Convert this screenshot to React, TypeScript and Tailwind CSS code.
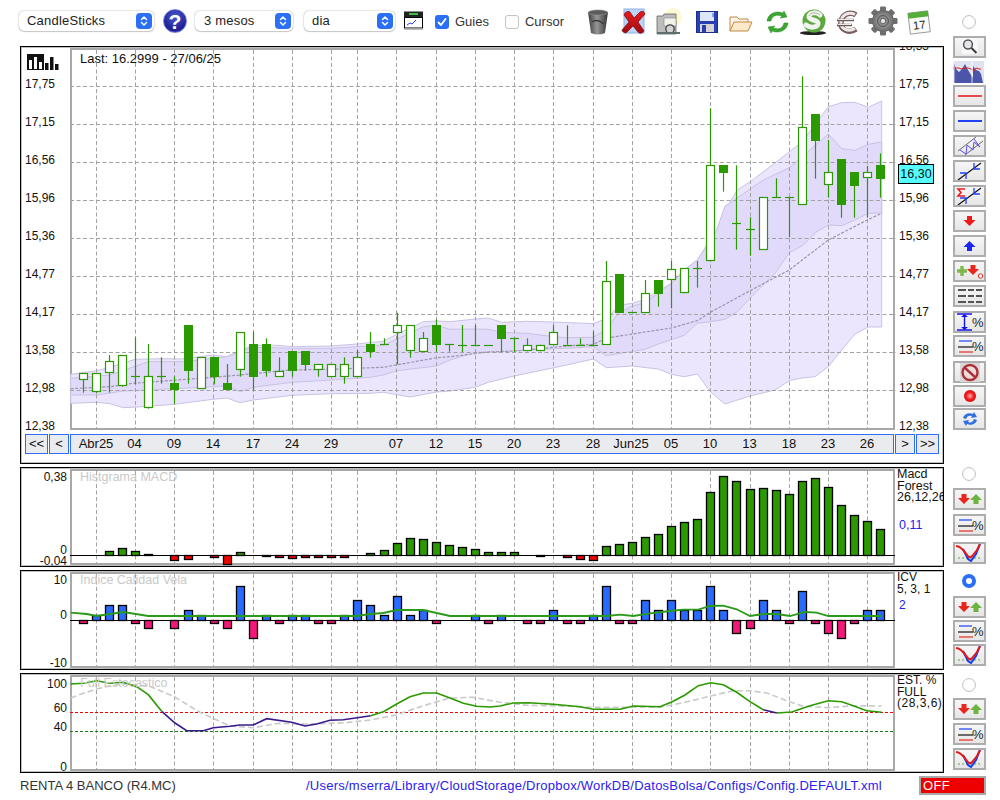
import React from "react";

type P = number[][];
const pts = (bx: number, by: number, a: P): P => a.map(([x, y]) => [bx + x / 3, by + y / 3]);
const str = (p: P) => p.map(([x, y]) => `${x.toFixed(1)},${y.toFixed(1)}`).join(" ");
const X = (i: number) => Math.floor(83.45 + 13.07 * i) + 0.5;
const GRID_X = [96.5, 135.5, 174.5, 213.5, 253.5, 292.5, 331.5, 357.5, 396.5, 436.5, 475.5, 514.5, 553.5, 593.5, 632.5, 671.5, 710.5, 750.5, 789.5, 828.5, 867.5];
const GRID_Y = [86.5, 124.5, 162.5, 200.5, 238.5, 276.5, 314.5, 352.5, 390.5];
const DATES: [string, number][] = [["Abr25", 96], ["04", 134.5], ["09", 174], ["14", 213], ["17", 253], ["24", 292], ["29", 331], ["07", 396], ["12", 436], ["15", 475], ["20", 514], ["23", 553], ["28", 593], ["Jun25", 631], ["05", 671], ["10", 710], ["13", 749.5], ["18", 789], ["23", 828], ["26", 867]];

// [wickTop, bodyTop, bodyBottom, wickBottom, type 0 hollow, 1 filled, 2 doji]
const C6 = [[280, 280, 298, 338, 0], [280, 280, 334, 340, 0], [225, 244, 277, 338, 0], [226, 226, 316, 320, 0], [172, 289, 289, 313, 2], [192, 289, 382, 386, 0], [232, 289, 289, 311, 2], [289, 310, 326, 371, 1], [135, 135, 269, 311, 1], [232, 232, 325, 327, 0], [232, 232, 287, 313, 1], [252, 310, 326, 331, 1], [157, 157, 268, 290, 0], [155, 193, 287, 331, 1], [175, 193, 269, 290, 1], [232, 272, 287, 290, 0], [214, 214, 269, 290, 1], [214, 214, 251, 272, 1], [253, 253, 268, 290, 0], [253, 253, 287, 290, 0], [232, 253, 287, 311, 0], [210, 232, 287, 290, 0], [156, 193, 212, 233, 1], [175, 193, 193, 193, 2], [98, 136, 155, 253, 0], [136, 136, 211, 233, 0], [156, 175, 212, 215, 0], [118, 136, 191, 215, 1], [193, 193, 193, 215, 2]];
const C8 = [[225, 284, 284, 306, 2], [225, 284, 284, 284, 2], [284, 284, 284, 284, 2], [226, 226, 263, 306, 1], [265, 265, 265, 306, 2], [265, 284, 301, 304, 0], [284, 284, 301, 304, 0], [226, 247, 281, 284, 0], [226, 284, 284, 284, 2], [265, 284, 284, 284, 2], [244, 284, 284, 284, 2], [33, 92, 281, 284, 0], [72, 72, 185, 187, 1], [187, 187, 187, 187, 2], [90, 130, 185, 187, 0], [91, 91, 128, 170, 1], [33, 56, 88, 175, 0], [55, 55, 127, 130, 0], [33, 55, 55, 113, 2]];
const C7 = [[145, 316, 601, 604, 0], [316, 316, 335, 395, 1], [316, 490, 490, 569, 2], [472, 508, 508, 587, 2], [412, 412, 566, 569, 0], [355, 412, 412, 412, 2], [412, 412, 412, 532, 2], [49, 202, 431, 434, 0], [163, 163, 239, 356, 1], [240, 337, 373, 413, 0], [298, 298, 431, 473, 1], [337, 337, 374, 473, 1], [318, 337, 352, 473, 0], [280, 316, 353, 413, 1]];
const CANDLES = [...C6.map((c) => c.slice(0, 4).map((v) => 280 + v / 3).concat(c[4])), ...C8.map((c) => c.slice(0, 4).map((v) => 250 + v / 3).concat(c[4])), ...C7.map((c) => c.slice(0, 4).map((v) => 60 + v / 3).concat(c[4]))];

const OUT_UP = [...pts(0, 280, [[212, 283], [290, 272], [330, 262], [406, 238], [484, 236], [545, 237], [640, 225], [680, 230], [720, 212], [760, 196], [830, 196], [880, 200], [994, 198], [1070, 192], [1150, 184], [1190, 163], [1270, 125], [1310, 123]]), ...pts(450, 250, [[0, 215], [76, 207], [115, 204], [155, 217], [230, 214], [310, 216], [430, 221], [470, 205], [510, 165], [547, 160], [586, 148], [664, 100], [703, 60], [742, 30]]), ...pts(450, 60, [[800, 510], [820, 460], [862, 390], [905, 362], [980, 305], [1057, 245], [1135, 140], [1175, 128], [1215, 127], [1255, 142], [1295, 123]])];
const OUT_LOW = [...pts(450, 250, [[1295, 231], [1255, 231], [1215, 252], [1175, 300], [1135, 350], [1095, 380], [1050, 385], [1018, 392], [975, 420], [900, 438], [825, 462], [781, 425], [742, 372], [703, 380], [664, 373], [625, 357], [547, 348], [469, 353], [430, 327], [350, 345], [193, 378], [115, 397], [76, 412], [0, 423]]), ...pts(0, 280, [[1310, 336], [1231, 351], [1150, 337], [1111, 340], [994, 341], [877, 346], [760, 360], [720, 368], [680, 354], [640, 358], [523, 373], [445, 379], [370, 383], [330, 371], [290, 367], [212, 370]])];
const IN_UP = [...pts(0, 280, [[212, 295], [330, 285], [445, 245], [545, 245], [600, 240], [680, 230], [720, 215], [760, 202], [880, 205], [994, 205], [1070, 200], [1150, 196], [1190, 178], [1270, 140], [1310, 136]]), ...pts(450, 250, [[0, 238], [76, 237], [115, 238], [155, 247], [230, 250], [310, 260], [350, 263], [430, 262], [469, 238], [505, 190], [547, 168], [586, 158], [664, 100], [703, 60], [742, 30]]), ...pts(450, 60, [[800, 510], [825, 438], [860, 415], [940, 360], [1018, 323], [1057, 290], [1135, 222], [1175, 266], [1215, 271], [1255, 253], [1295, 246]])];
const IN_LOW = [...pts(450, 60, [[1295, 459], [1255, 460], [1215, 480], [1175, 497], [1135, 495], [1100, 515], [1060, 555], [1018, 578], [975, 640], [900, 715]]), ...pts(450, 250, [[862, 185], [825, 208], [781, 215], [742, 220], [703, 256], [625, 282], [586, 298], [469, 317], [430, 290], [350, 295], [232, 300], [154, 305], [76, 307], [0, 330]]), ...pts(0, 280, [[1310, 258], [1190, 272], [1150, 285], [1111, 292], [994, 300], [877, 307], [760, 322], [720, 335], [680, 318], [640, 320], [445, 330], [370, 333], [290, 345], [212, 345]])];
const SMA = [...pts(0, 280, [[212, 326], [330, 320], [400, 310], [640, 292], [720, 285], [870, 270], [1000, 268], [1090, 264], [1150, 262], [1310, 233]]), ...pts(450, 250, [[0, 320], [115, 306], [200, 303], [350, 288], [430, 283], [470, 264], [664, 234], [742, 212], [781, 187], [900, 122], [1018, 60]]), ...pts(450, 60, [[1135, 540], [1252, 480], [1295, 460]])];

// MACD: top (or bottom) edge in zoomed units, baseline 285; 0 = none
const MACD = [0, 0, 274, 265, 274, 283, 0, 301, 298, 0, 292, 311, 277, 0, 289, 292, 295, 292, 292, 292, 292, 0, 280, 271, 250, 235, 238, 247, 256, 262, 268, 277, 277, 277, 0, 289, 0, 292, 298, 301, 259, 253, 247, 232, 223, 199, 187, 178, 97, 49, 64, 88, 85, 91, 103, 64, 55, 82, 136, 166, 184, 208];
const ICV = [490, 466, 436, 436, 490, 505, 0, 505, 451, 466, 490, 505, 379, 535, 466, 490, 466, 466, 490, 490, 466, 421, 436, 466, 409, 466, 451, 490, 0, 0, 466, 490, 466, 0, 490, 490, 451, 490, 490, 466, 379, 490, 490, 421, 451, 421, 451, 451, 379, 451, 520, 505, 421, 451, 490, 394, 490, 520, 535, 490, 451, 451];
const ICV_LINE = [...pts(0, 460, [[212, 458], [260, 462], [290, 468], [370, 456], [445, 468], [1070, 468], [1110, 462], [1150, 459], [1190, 450], [1270, 450]]), ...pts(450, 460, [[0, 468], [470, 468], [510, 464], [550, 468], [600, 460], [660, 453], [700, 449], [745, 449], [780, 438], [820, 437], [860, 448], [900, 468], [940, 462], [980, 462], [1020, 468], [1065, 456], [1100, 458], [1135, 468], [1295, 468]])];
const EST_G1 = pts(0, 665, [[212, 60], [250, 58], [290, 50], [330, 58], [370, 55], [410, 68], [445, 92], [485, 142]]);
const EST_P1 = pts(0, 665, [[485, 142], [525, 177], [560, 200], [610, 200], [640, 191], [690, 187], [720, 183], [760, 183], [800, 164], [875, 175], [915, 186], [950, 180], [990, 169], [1030, 167], [1072, 161], [1112, 155]]);
const EST_G2 = [...pts(0, 665, [[1112, 155], [1150, 143], [1190, 120], [1230, 98], [1270, 87], [1310, 87], [1350, 102], [1390, 118], [1430, 127], [1470, 129]]), ...pts(500, 665, [[0, 126], [40, 117], [85, 116], [160, 121], [240, 128], [280, 136], [360, 136], [400, 126], [480, 128], [515, 114], [555, 93], [595, 65], [632, 56], [670, 62], [710, 85], [750, 113], [790, 137]])];
const EST_P2 = pts(500, 665, [[790, 137], [830, 147]]);
const EST_G3 = pts(500, 665, [[830, 147], [875, 144], [930, 125], [985, 110], [1025, 113], [1060, 125], [1100, 140], [1145, 145]]);
const EST_D = [...pts(0, 665, [[212, 102], [250, 88], [290, 75], [330, 65], [370, 60], [445, 65], [523, 98], [600, 145], [690, 186], [760, 191], [838, 178], [915, 180], [1030, 177], [1112, 168], [1190, 152], [1270, 125], [1350, 102], [1420, 100]]), ...pts(500, 665, [[0, 115], [80, 124], [160, 125], [280, 130], [360, 130], [480, 130], [555, 115], [632, 96], [700, 80], [750, 80], [800, 87], [860, 110], [910, 127], [985, 131], [1060, 125], [1145, 126]])];

const VGrid = ({ top, bottom }: { top: number; bottom: number }) => (
  <g stroke="#a2a2a2" strokeWidth="1" strokeDasharray="4 2.5">
    {GRID_X.map((x) => <line key={x} x1={x} x2={x} y1={top} y2={bottom} />)}
  </g>
);

const MainChart = () => (
  <svg width="821" height="378" viewBox="72 50 821 378" className="block overflow-visible">
    <polygon points={str([...OUT_UP, ...OUT_LOW])} fill="#ebe6fd" stroke="#c8c3e3" strokeWidth="1" />
    <polygon points={str([...IN_UP, ...IN_LOW])} fill="#e2dafb" stroke="#c8c3e3" strokeWidth="1" />
    <VGrid top={50} bottom={428} />
    <g stroke="#a2a2a2" strokeWidth="1" strokeDasharray="4 2.5">
      {GRID_Y.map((y) => <line key={y} x1="70" x2="896" y1={y} y2={y} />)}
    </g>
    <polyline points={str(SMA)} fill="none" stroke="#9c96ad" strokeWidth="1.2" strokeDasharray="3 1.5" />
    {CANDLES.map((c, i) => {
      const x = X(i);
      const [wt, bt, bb, wb, t] = c;
      const rt = Math.round(bt) + 0.5;
      const rb = Math.round(bb) + 0.5;
      return (
        <g key={i}>
          <line x1={x} x2={x} y1={wt} y2={wb} stroke="#2a9a00" strokeWidth="1.2" />
          {t === 2 && <line x1={x - 4.5} x2={x + 4.5} y1={rt} y2={rt} stroke="#2a9a00" strokeWidth="1.2" />}
          {t === 1 && <rect x={x - 4.5} y={rt - 0.5} width="9" height={rb - rt + 1} fill="#2a9a00" />}
          {t === 0 && <rect x={x - 4} y={rt} width="8" height={rb - rt} fill="#ffffff" stroke="#2a9a00" strokeWidth="1.2" />}
        </g>
      );
    })}
  </svg>
);

const MacdChart = () => (
  <svg width="821" height="92" viewBox="72 471 821 92" className="block overflow-visible">
    <VGrid top={471} bottom={563} />
    {MACD.map((v, i) => {
      if (!v) return null;
      const e = Math.round(460 + v / 3) + 0.5;
      const t = Math.min(e, 555.5);
      const h = Math.abs(e - 555.5);
      return <rect key={i} x={X(i) - 4} y={t} width="8" height={h} fill={v > 285 ? "#f20000" : "#2a9a00"} stroke="#000" strokeWidth="1.3" />;
    })}
    <line x1="70" x2="895" y1="555.5" y2="555.5" stroke="#000" strokeWidth="1.1" />
  </svg>
);

const IcvChart = () => (
  <svg width="821" height="92" viewBox="72 574 821 92" className="block overflow-visible">
    <VGrid top={574} bottom={666} />
    {ICV.map((v, i) => {
      if (!v) return null;
      const e = Math.round(460 + v / 3) + 0.5;
      const t = Math.min(e, 620.5);
      const h = Math.abs(e - 620.5);
      return <rect key={i} x={X(i) - 4} y={t} width="8" height={h} fill={v > 481 ? "#f3187a" : "#2a6bff"} stroke="#000" strokeWidth="1.3" />;
    })}
    <line x1="70" x2="895" y1="620.5" y2="620.5" stroke="#000" strokeWidth="1.1" />
    <polyline points={str(ICV_LINE)} fill="none" stroke="#2a9a1a" strokeWidth="1.8" />
  </svg>
);

const EstChart = () => (
  <svg width="821" height="92" viewBox="72 678 821 92" className="block overflow-visible">
    <VGrid top={678} bottom={770} />
    <line x1="70" x2="895" y1="713.5" y2="713.5" stroke="#f00000" strokeWidth="1" strokeDasharray="3 2" />
    <line x1="70" x2="895" y1="732.5" y2="732.5" stroke="#1a7a1a" strokeWidth="1" strokeDasharray="3 2" />
    <polyline points={str(EST_D)} fill="none" stroke="#c9c9c9" strokeWidth="1.6" strokeDasharray="6 3" />
    <polyline points={str(EST_G1)} fill="none" stroke="#2a9a00" strokeWidth="1.6" />
    <polyline points={str(EST_P1)} fill="none" stroke="#3a1a8c" strokeWidth="1.6" />
    <polyline points={str(EST_G2)} fill="none" stroke="#2a9a00" strokeWidth="1.6" />
    <polyline points={str(EST_P2)} fill="none" stroke="#3a1a8c" strokeWidth="1.6" />
    <polyline points={str(EST_G3)} fill="none" stroke="#2a9a00" strokeWidth="1.6" />
  </svg>
);

const Chevrons = () => (
  <svg width="8" height="12" viewBox="0 0 8 12" fill="none" stroke="#fff" strokeWidth="1.5" strokeLinecap="round" strokeLinejoin="round">
    <path d="M1.5 4.5 4 2l2.5 2.5" />
    <path d="M1.5 7.5 4 10l2.5-2.5" />
  </svg>
);

const Select = ({ label, w, ml, pl }: { label: string; w: string; ml: string; pl: string }) => (
  <div className={`${w} ${ml} ${pl} h-[20px] rounded-[5px] bg-white shadow-[0_0_1.5px_rgba(0,0,0,0.45),0_1px_1px_rgba(0,0,0,0.15)] flex items-center justify-between pr-[2px] text-[13px] tracking-[0.2px] text-[#222]`}>
    <span>{label}</span>
    <span className="w-[16px] h-[16px] rounded-[4px] bg-[#2a6ff5] flex items-center justify-center"><Chevrons /></span>
  </div>
);

const IconTrash = () => (
  <svg width="24" height="28" viewBox="0 0 24 28" className="ml-[22px]">
    <defs><linearGradient id="tr" x1="0" x2="1"><stop offset="0" stopColor="#3c3c3c" /><stop offset="0.45" stopColor="#979797" /><stop offset="1" stopColor="#333" /></linearGradient></defs>
    <path d="M2 4 Q12 0 22 4 L19 25 Q12 28 5 25 Z" fill="url(#tr)" />
    <ellipse cx="12" cy="4.5" rx="9.5" ry="2.6" fill="#5a5a5a" stroke="#9a9a9a" strokeWidth="0.6" />
    <path d="M6 14q5-4 12 2" stroke="#3a3a3a" strokeWidth="1.5" fill="none" />
  </svg>
);
const IconX = () => (
  <svg width="28" height="28" viewBox="0 0 28 28" className="ml-[10px]">
    <defs><linearGradient id="xr" x1="0" y1="0" x2="0" y2="1"><stop offset="0" stopColor="#e81c20" /><stop offset="1" stopColor="#a00a0e" /></linearGradient></defs>
    <rect x="4" y="1" width="20" height="24" fill="#bcd4f7" stroke="#8fb2e6" />
    <path d="M5 5q3-3 5-1l4 6 6-6q4-2 5 2l-7 8 6 9q-3 4-6 1l-5-6-7 7q-4-1-4-3l7-8-5-7z" fill="url(#xr)" stroke="#7d0508" strokeWidth="0.7" />
  </svg>
);
const IconCamera = () => (
  <svg width="28" height="28" viewBox="0 0 28 28" className="ml-[8px]">
    <circle cx="17" cy="9" r="9" fill="#fbf7c8" opacity="0.8" />
    <path d="M1 8h6l1-2h12v20H1z" fill="#bcbcbc" stroke="#666" strokeWidth="0.8" />
    <rect x="8" y="10" width="12" height="8" rx="1" fill="#f3f3ea" stroke="#888" strokeWidth="0.6" />
    <circle cx="14" cy="21" r="4.2" fill="#d4d4d4" stroke="#444" strokeWidth="1.3" />
    <rect x="1" y="24" width="23" height="2" fill="#5f6f6f" />
  </svg>
);
const IconSave = () => (
  <svg width="22" height="22" viewBox="0 0 22 22" className="ml-[12px]">
    <rect x="0.5" y="0.5" width="21" height="21" fill="#2a3fb0" stroke="#1c2c90" />
    <rect x="4" y="1" width="14" height="9" fill="#dce6f7" />
    <rect x="16" y="2" width="2" height="4" fill="#8ca2d8" />
    <rect x="4" y="13" width="14" height="8" fill="#d5d5d5" />
    <rect x="6" y="14" width="4" height="7" fill="#2a3fb0" />
  </svg>
);
const IconFolder = () => (
  <svg width="24" height="18" viewBox="0 0 24 18" className="ml-[11px]">
    <path d="M1 17V3h7l2 2h9v3" fill="#fdf5e8" stroke="#c08a48" />
    <path d="M1 17 5 8h18l-4 9z" fill="#fbe9c8" stroke="#c08a48" />
  </svg>
);
const IconRefresh = () => (
  <svg width="25" height="24" viewBox="0 0 25 24" className="ml-[12px]">
    <path d="M2 11C3 4 10 0 18 3l1-2 3 6-7 1 2-2C11 4 7 6 6 11z" fill="#39a831" stroke="#2a8025" strokeWidth="0.5" />
    <path d="M23 13c-1 7-8 11-16 8l-1 2-3-6 7-1-2 2c6 2 10 0 11-5z" fill="#39a831" stroke="#2a8025" strokeWidth="0.5" />
  </svg>
);
const IconS = () => (
  <svg width="28" height="28" viewBox="0 0 28 28" className="ml-[9px]">
    <ellipse cx="14" cy="25" rx="13" ry="2" fill="#222" />
    <circle cx="15" cy="13" r="11.5" fill="#5aa83e" />
    <path d="M21 7c-3-3-10-3-11 1-1 5 10 3 9 8-1 4-8 4-12 1" fill="none" stroke="#f2f2ee" strokeWidth="5" strokeLinecap="round" />
    <path d="M21 7c-3-3-10-3-11 1" fill="none" stroke="#aab5a5" strokeWidth="1" />
  </svg>
);
const IconEuro = () => (
  <svg width="26" height="26" viewBox="0 0 26 26" className="ml-[8px]">
    <path d="M21 5c-6-4-14-1-15 7-1 8 8 12 15 7" fill="none" stroke="#7b5d5d" strokeWidth="5.5" />
    <path d="M20 4.5c-6-3-13-.5-14 7-1 7 7 11 14 7" fill="none" stroke="#ecE8e8" strokeWidth="3" />
    <path d="M2 10h17M2 15h15" stroke="#6f5a5a" strokeWidth="2.6" />
    <path d="M2.5 9.5h16M2.5 14.5h14" stroke="#ece8e8" strokeWidth="1.2" />
  </svg>
);
const IconGear = () => (
  <svg width="30" height="30" viewBox="0 0 30 30" className="ml-[7px]">
    <defs><radialGradient id="ge"><stop offset="0.3" stopColor="#a4a4a4" /><stop offset="1" stopColor="#666" /></radialGradient></defs>
    <g fill="#6e6e6e">
      {[0, 45, 90, 135, 180, 225, 270, 315].map((a) => <rect key={a} x="12" y="0.5" width="6" height="7" rx="1.2" transform={`rotate(${a} 15 15)`} />)}
    </g>
    <circle cx="15" cy="15" r="11" fill="url(#ge)" />
    <circle cx="15" cy="15" r="5.5" fill="#8a8a8a" stroke="#555" />
    <circle cx="15" cy="15" r="2.6" fill="#e8e8e8" stroke="#444" strokeWidth="0.7" />
  </svg>
);
const IconCal = () => (
  <svg width="26" height="26" viewBox="0 0 26 26" className="ml-[8px]">
    <g transform="rotate(-7 13 13)">
      <rect x="3" y="3" width="20" height="21" fill="#fbfbf8" stroke="#777" strokeWidth="0.7" />
      <rect x="3" y="3" width="20" height="5.5" fill="#53ad38" />
      <text x="13" y="20" textAnchor="middle" fontSize="11.5" fill="#222">17</text>
    </g>
  </svg>
);
const IconWindow = () => (
  <svg width="20" height="20" viewBox="0 0 20 20" className="ml-[9px]">
    <rect x="0" y="0.5" width="19" height="6" fill="#222" />
    <rect x="5" y="2" width="9" height="2" fill="#39c239" />
    <rect x="0.5" y="6.5" width="18" height="10.5" fill="#fff" stroke="#000" />
    <path d="M3 14l3-2 2 1 4-4" fill="none" stroke="#1f3fe0" strokeWidth="1" />
    <rect x="0" y="17.5" width="19" height="1.5" fill="#bbb" />
  </svg>
);

const Radio = ({ on, cls }: { on?: boolean; cls: string }) =>
  on ? (
    <div className={`w-[14px] h-[14px] rounded-full border-[4px] border-[#2a6ff5] bg-white ml-[9px] ${cls}`} />
  ) : (
    <div className={`w-[14px] h-[14px] rounded-full border border-[#c4c4c4] bg-white shadow-[inset_0_0_1px_rgba(0,0,0,0.15)] ml-[9px] ${cls}`} />
  );

const Btn = ({ children, cls = "" }: { children?: React.ReactNode; cls?: string }) => (
  <div className={`w-[33px] h-[22px] shrink-0 border-2 border-[#adadad] bg-gradient-to-b from-[#f6f6f6] to-[#e6e6e6] flex items-center justify-center ${cls}`}>
    {children}
  </div>
);

const Svg = ({ children }: { children: React.ReactNode }) => (
  <svg width="29" height="18" viewBox="0 0 29 18" className="block">{children}</svg>
);
const DownArrow = ({ x, y, c = "#e8261c", s = 1 }: { x: number; y: number; c?: string; s?: number }) => (
  <path d={`M${x - 2.5 * s} ${y - 5 * s}h${5 * s}v${4 * s}h${3.5 * s}l-${6 * s} ${6 * s}-${6 * s}-${6 * s}h${3.5 * s}z`} fill={c} />
);
const UpArrow = ({ x, y, c = "#1a28f0", s = 1 }: { x: number; y: number; c?: string; s?: number }) => (
  <path d={`M${x - 2.5 * s} ${y + 5 * s}h${5 * s}v-${4 * s}h${3.5 * s}l-${6 * s}-${6 * s}-${6 * s} ${6 * s}h${3.5 * s}z`} fill={c} />
);
const LinesPct = () => (
  <Svg>
    <path d="M4 4h13" stroke="#2a4cf0" strokeWidth="1.3" />
    <path d="M3 10h15" stroke="#222" strokeWidth="1.3" />
    <path d="M4 15h14" stroke="#e85a50" strokeWidth="1.6" />
    <text x="17" y="14" fontSize="13" fill="#222">%</text>
  </Svg>
);
const Curve = () => (
  <Svg>
    <path d="M3 14h24" stroke="#2a9a1a" strokeWidth="0.8" strokeDasharray="2 2" />
    <path d="M8 5l5 10 3 2 5-7 4-10" fill="none" stroke="#1a3af0" strokeWidth="2" />
    <path d="M1 2c5 0 8 5 11 9 2 3 4 3 6 0l4-5 3-6" fill="none" stroke="#e01a1a" strokeWidth="2" />
  </Svg>
);
const RedGreen = () => (
  <Svg>
    <DownArrow x={9} y={9} />
    <UpArrow x={21} y={9} c="#6db33f" />
  </Svg>
);
const Trend = () => (
  <>
    <path d="M3 18 26 1" stroke="#111" strokeWidth="1.2" />
    <path d="M11 17v-6H5" fill="none" stroke="#2040ff" strokeWidth="1.3" />
    <path d="M19 1v6h6" fill="none" stroke="#2040ff" strokeWidth="1.3" />
  </>
);

const Sidebar = () => (
  <div className="w-[47px] flex flex-col">
    <Radio cls="mt-[15px] mb-[7px]" />
    <div className="flex flex-col gap-[3px]">
      <Btn>
        <svg width="25" height="18" viewBox="0 0 25 18" className="block">
          <rect x="5" y="0" width="16" height="16" fill="#f8f8f8" />
          <circle cx="11" cy="6.5" r="4.4" fill="#e4e6ea" stroke="#555" strokeWidth="1.5" />
          <path d="M14.5 10l5 5" stroke="#3a3a3a" strokeWidth="2" />
        </svg>
      </Btn>
      <div className="w-[31px] h-[22px] shrink-0 bg-[#dfe3f1]">
        <svg width="31" height="22" viewBox="0 0 31 22" className="block">
          <path d="M1 22V2l2 6 3 3 3-3 3-5 3 6 3 5 2 3V5l3 4 3 1 2 3 2 9z" fill="#4c56a8" />
          <path d="M0 7h6l2 1 3-1 4 0 3 1 3 2 2-3 3 1 2 0" fill="none" stroke="#e82020" strokeWidth="1" />
          <path d="M1 0v22M19 0v22" stroke="#fff" strokeWidth="0.8" />
        </svg>
      </div>
      <Btn cls="mt-[-1px]"><Svg><path d="M3 9h24" stroke="#e8494b" strokeWidth="2" /></Svg></Btn>
      <Btn><Svg><path d="M3 9h24" stroke="#2040f5" strokeWidth="2" /></Svg></Btn>
      <Btn>
        <Svg>
          <path d="M3 14 21 0M10 18 28 4" stroke="#555" strokeWidth="0.9" />
          <path d="M5 13l6 4 1-9 6 5 1-8 6 5-6-8" fill="none" stroke="#5a4ee8" strokeWidth="1" />
        </Svg>
      </Btn>
      <Btn><Svg><Trend /></Svg></Btn>
      <Btn>
        <Svg>
          <Trend />
          <path d="M10 2H3l3 3.5L3 9h7" fill="none" stroke="#e81f1f" strokeWidth="1.6" />
        </Svg>
      </Btn>
      <Btn><Svg><DownArrow x={14.5} y={9} c="#f01818" /></Svg></Btn>
      <Btn><Svg><UpArrow x={14.5} y={9} /></Svg></Btn>
      <Btn>
        <Svg>
          <path d="M7 4v10M2 9h10" stroke="#7fb84a" strokeWidth="3.4" />
          <DownArrow x={18} y={8} />
          <circle cx="25.5" cy="14" r="2.2" fill="#fff" stroke="#e8261c" />
        </Svg>
      </Btn>
      <Btn>
        <Svg>
          <g stroke="#555" strokeWidth="2">
            <path d="M3 3h8M13 3h6M21 3h6M3 9h8M13 9h6M21 9h6M3 15h8M13 15h6M21 15h6" />
          </g>
        </Svg>
      </Btn>
      <Btn cls="mt-[1px]">
        <Svg>
          <path d="M2 1h15M2 17h15M9.5 2v14" stroke="#1414ee" strokeWidth="1.4" />
          <path d="M6 4l3.5-3 3.5 3zM6 14l3.5 3 3.5-3z" fill="#1414ee" />
          <text x="17" y="14" fontSize="13" fill="#222">%</text>
        </Svg>
      </Btn>
      <Btn cls="mt-[-1px]"><LinesPct /></Btn>
      <Btn cls="mt-[1px]">
        <svg width="20" height="19" viewBox="0 0 20 19" className="block">
          <rect width="20" height="19" fill="#d8d8d8" />
          <circle cx="10" cy="9.5" r="7.5" fill="#eadcdc" stroke="#b03038" strokeWidth="2.4" />
          <path d="M5 5l10 9" stroke="#b03038" strokeWidth="2.4" />
        </svg>
      </Btn>
      <Btn cls="mt-[-1px]">
        <svg width="14" height="14" viewBox="0 0 14 14" className="block">
          <defs><radialGradient id="rec"><stop offset="0" stopColor="#ffb0b0" /><stop offset="0.6" stopColor="#f42020" /><stop offset="1" stopColor="#d80a0a" /></radialGradient></defs>
          <circle cx="7" cy="7" r="6" fill="url(#rec)" />
        </svg>
      </Btn>
      <Btn cls="mt-[-2px]">
        <svg width="20" height="18" viewBox="0 0 20 18" className="block">
          <path d="M3 8c1-4 6-6 10-4l1-2 3 5-6 1 1-2c-3-1-5 0-6 3z" fill="#2f6fe0" />
          <path d="M17 10c-1 4-6 6-10 4l-1 2-3-5 6-1-1 2c3 1 5 0 6-3z" fill="#2f6fe0" />
        </svg>
      </Btn>
    </div>
    <Radio cls="mt-[37px] mb-[7px]" />
    <div className="flex flex-col gap-[4px]">
      <Btn><RedGreen /></Btn>
      <Btn><LinesPct /></Btn>
      <Btn cls="mt-[2px]"><Curve /></Btn>
    </div>
    <Radio on cls="mt-[10px] mb-[8px]" />
    <div className="flex flex-col gap-[2px]">
      <Btn><RedGreen /></Btn>
      <Btn><LinesPct /></Btn>
      <Btn><Curve /></Btn>
    </div>
    <Radio cls="mt-[12px] mb-[6px]" />
    <div className="flex flex-col gap-[3px]">
      <Btn><RedGreen /></Btn>
      <Btn><LinesPct /></Btn>
      <Btn><Curve /></Btn>
    </div>
    <div className="mt-[6px] -ml-[34px] w-[67px] h-[19px] border-2 border-[#a9a9a9] bg-[#ee0000] text-white text-[13px] leading-[15px] pl-[2px] tracking-[0.3px]">OFF</div>
  </div>
);

const Nav = ({ w, children }: { w: string; children: string }) => (
  <div className={`${w} h-[20px] border border-[#2f6bff] bg-[#eaebef] flex items-center justify-center text-[13px] text-[#111]`}>{children}</div>
);

const Panel = ({ cls, children }: { cls: string; children: React.ReactNode }) => (
  <div className={`w-[924px] border border-black shadow-[inset_0_0_0_1px_rgba(0,0,0,0.25)] relative overflow-hidden ${cls}`}>{children}</div>
);

const Plot = ({ h, children, title }: { h: string; children: React.ReactNode; title?: string }) => (
  <div className={`w-[825px] ${h} border-2 border-[#a8a8a8] relative shrink-0`}>
    {children}
    {title && <div className="absolute left-[8px] -top-[1px] text-[12.5px] leading-[14px] text-[#c9c9c9] whitespace-nowrap">{title}</div>}
  </div>
);

const AXIS_R = ["18,35", "17,75", "17,15", "16,56", "15,96", "15,36", "14,77", "14,17", "13,58", "12,98", "12,38"];

const SubLabels = ({ items }: { items: [string, string][] }) => (
  <div className="w-[49px] flex flex-col items-end pr-[3px] text-[12px] leading-[12px] text-[#111] shrink-0">
    {items.map(([t, m]) => <span key={t} className={m}>{t}</span>)}
  </div>
);

export default function App() {
  return (
    <div className="w-[1000px] h-[800px] bg-white overflow-hidden flex font-['Liberation_Sans',Arial,sans-serif] text-[#1a1a1a]">
      <div className="w-[953px] flex flex-col shrink-0">
        <div className="h-[46px] flex items-start pt-[11px] pl-[19px]">
          <Select label="CandleSticks" w="w-[135px]" ml="" pl="pl-[8px]" />
          <div className="ml-[9px] -mt-[2px] w-[24px] h-[24px] rounded-full border border-[#7a80e0] bg-[radial-gradient(circle_at_50%_30%,#4a56d0,#1c2090_70%,#4a50c0)] flex items-center justify-center text-white text-[21px] font-bold leading-none">?</div>
          <Select label="3 mesos" w="w-[98px]" ml="ml-[8px]" pl="pl-[9px]" />
          <Select label="dia" w="w-[91px]" ml="ml-[11px]" pl="pl-[8px]" />
          <IconWindow />
          <div className="ml-[11px] mt-[4px] w-[14px] h-[14px] rounded-[3px] bg-[#2a6ff5] flex items-center justify-center">
            <svg width="10" height="10" viewBox="0 0 10 10" fill="none" stroke="#fff" strokeWidth="1.8" strokeLinecap="round" strokeLinejoin="round"><path d="M1.5 5.5 4 8l4.5-6" /></svg>
          </div>
          <span className="ml-[6px] mt-[3px] text-[13px] leading-[16px] text-[#333]">Guies</span>
          <div className="ml-[16px] mt-[4px] w-[14px] h-[14px] rounded-[3px] border border-[#c4c4c4] bg-white" />
          <span className="ml-[6px] mt-[3px] text-[13px] leading-[16px] text-[#333]">Cursor</span>
          <div className="flex items-start -mt-[3px]">
            <IconTrash />
            <IconX />
            <IconCamera />
            <div className="mt-[3px]"><IconSave /></div>
            <div className="mt-[6px]"><IconFolder /></div>
            <div className="mt-[2px]"><IconRefresh /></div>
            <IconS />
            <div className="mt-[2px]"><IconEuro /></div>
            <div className="-mt-[2px]"><IconGear /></div>
            <div className="mt-[1px]"><IconCal /></div>
          </div>
        </div>

        <div className="pl-[20px] flex flex-col">
          <Panel cls="h-[418px] pt-[1px] flex flex-col">
            <div className="flex h-[382px]">
              <div className="w-[49px] shrink-0 text-[12px] text-[#111]">
                <div className="h-[17px] pt-[6px] pl-[6px]">
                  <svg width="32" height="16" viewBox="0 0 32 16" className="block overflow-visible">
                    <rect x="0" y="0" width="17" height="16" fill="#111" />
                    <rect x="2" y="6" width="3" height="9" fill="#fff" />
                    <rect x="7" y="3" width="3" height="12" fill="#fff" />
                    <rect x="12" y="8" width="3" height="7" fill="#fff" />
                    <rect x="18" y="9" width="3.5" height="7" fill="#111" />
                    <rect x="23" y="3" width="3.5" height="13" fill="#111" />
                    <rect x="28" y="10" width="3.5" height="6" fill="#111" />
                  </svg>
                </div>
                {AXIS_R.slice(1).map((t) => <div key={t} className="h-[38px] flex items-center pl-[4px] shrink-0 whitespace-nowrap">{t}</div>)}
              </div>
              <Plot h="h-[382px]">
                <MainChart />
                <div className="absolute left-[8px] top-[1px] text-[13px] leading-[16px] text-[#111] whitespace-nowrap">Last: 16.2999 - 27/06/25</div>
              </Plot>
              <div className="w-[48px] shrink-0 text-[12px] text-[#111] -mt-[21px] relative">
                {AXIS_R.map((t) => <div key={t} className="h-[38px] flex items-center pl-[4px] whitespace-nowrap">{t}</div>)}
                <div className="absolute left-[3px] top-[137px] w-[36px] h-[20px] border border-black bg-[#55ffff] flex items-center justify-center text-[12.5px]">16,30</div>
              </div>
            </div>
            <div className="flex gap-[1px] pl-[4px] mt-[4px]">
              <Nav w="w-[23px]">{"<<"}</Nav>
              <Nav w="w-[20px]">{"<"}</Nav>
              <div className="w-[824px] h-[20px] border border-[#2f6bff] bg-[#eaebef] relative text-[13px] leading-[18px] text-[#111]">
                {DATES.map(([t, x]) => (
                  <span key={t + x} className="absolute top-0 -translate-x-1/2 whitespace-nowrap" style={{ left: x - 71 }}>{t}</span>
                ))}
              </div>
              <Nav w="w-[20px]">{">"}</Nav>
              <Nav w="w-[23px]">{">>"}</Nav>
            </div>
          </Panel>

          <Panel cls="h-[100px] mt-[3px] flex pt-[1px]">
            <SubLabels items={[["0,38", "mt-[2px]"], ["0", "mt-[61px]"], ["-0,04", "-mt-[1px]"]]} />
            <Plot h="h-[96px]" title="Histgrama MACD"><MacdChart /></Plot>
            <div className="pl-[2px] text-[12.5px] leading-[11.5px] text-[#111] whitespace-nowrap">
              <div>Macd</div><div>Forest</div><div>26,12,26</div>
              <div className="mt-[16px] ml-[2px] text-[#2222ee]">0,11</div>
            </div>
          </Panel>

          <Panel cls="h-[100px] mt-[3px] flex pt-[1px]">
            <SubLabels items={[["10", "mt-[2px]"], ["0", "mt-[23px]"], ["-10", "mt-[36px]"]]} />
            <Plot h="h-[96px]" title="Indice Calidad Vela"><IcvChart /></Plot>
            <div className="pl-[2px] text-[12px] leading-[11.5px] text-[#111] whitespace-nowrap">
              <div>ICV</div><div>5, 3, 1</div>
              <div className="mt-[5px] ml-[2px] text-[#2222ee]">2</div>
            </div>
          </Panel>

          <Panel cls="h-[100px] mt-[3px] flex pt-[1px]">
            <SubLabels items={[["100", "mt-[3px]"], ["60", "mt-[12px]"], ["40", "mt-[7px]"], ["0", "mt-[28px]"]]} />
            <Plot h="h-[96px]" title="Full Estocastico"><EstChart /></Plot>
            <div className="pl-[2px] text-[12px] leading-[11.5px] text-[#111] whitespace-nowrap">
              <div>EST. %</div><div>FULL</div><div className="tracking-[0.5px]">(28,3,6)</div>
            </div>
          </Panel>

          <div className="flex items-center h-[26px] text-[13px] whitespace-nowrap">
            <span className="w-[286px] text-[#333]">RENTA 4 BANCO (R4.MC)</span>
            <span className="text-[#2a20f0] tracking-[0.24px]">/Users/mserra/Library/CloudStorage/Dropbox/WorkDB/DatosBolsa/Configs/Config.DEFAULT.xml</span>
          </div>
        </div>
      </div>
      <Sidebar />
    </div>
  );
}
